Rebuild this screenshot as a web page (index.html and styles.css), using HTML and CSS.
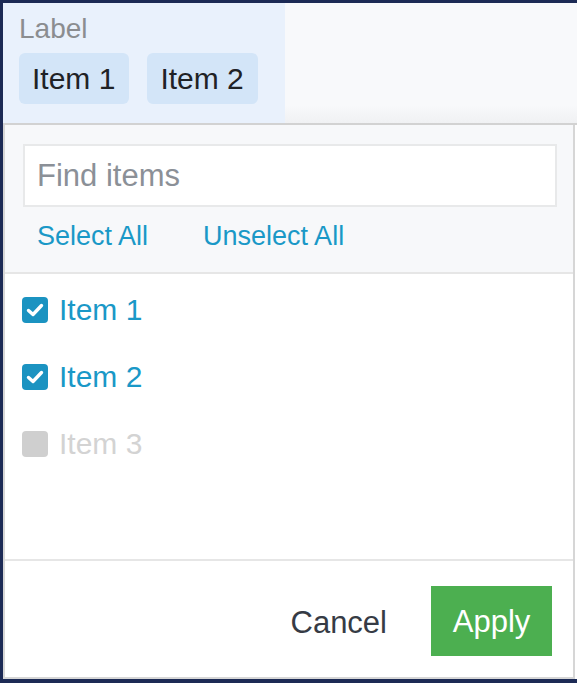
FILE: index.html
```html
<!DOCTYPE html>
<html>
<head>
<meta charset="utf-8">
<link rel="stylesheet" href="styles.css">
</head>
<body>
<div class="frame">
  <div class="header">
    <div class="field">
      <div class="label">Label</div>
      <div class="chips">
        <span class="chip">Item 1</span>
        <span class="chip">Item 2</span>
      </div>
    </div>
  </div>
  <div class="panel">
    <div class="top">
      <div class="search">Find items</div>
      <div class="links">
        <span class="link">Select All</span>
        <span class="link">Unselect All</span>
      </div>
    </div>
    <div class="list">
      <div class="item checked">
        <span class="box"><svg viewBox="0 0 24 24" width="24" height="24"><path d="M5.5 12.5 L10 16.5 L18.5 7.5" fill="none" stroke="#fff" stroke-width="3.4" stroke-linecap="round" stroke-linejoin="round"/></svg></span>
        <span class="text">Item 1</span>
      </div>
      <div class="item checked">
        <span class="box"><svg viewBox="0 0 24 24" width="24" height="24"><path d="M5.5 12.5 L10 16.5 L18.5 7.5" fill="none" stroke="#fff" stroke-width="3.4" stroke-linecap="round" stroke-linejoin="round"/></svg></span>
        <span class="text">Item 2</span>
      </div>
      <div class="item disabled">
        <span class="box"></span>
        <span class="text">Item 3</span>
      </div>
    </div>
    <div class="footer">
      <span class="cancel">Cancel</span>
      <span class="apply">Apply</span>
    </div>
  </div>
</div>
</body>
</html>
```

FILE: styles.css
```css
html, body {
  margin: 0;
  padding: 0;
  background: #ffffff;
}
body {
  width: 577px;
  height: 683px;
  overflow: hidden;
  font-family: "Liberation Sans", Arial, sans-serif;
}
.frame {
  box-sizing: border-box;
  width: 577px;
  height: 683px;
  border-top: 3px solid #1c2a55;
  border-left: 3px solid #1c2a55;
  border-bottom: 4px solid #1c2a55;
  display: flex;
  flex-direction: column;
}
.header {
  height: 120px;
  background: linear-gradient(#f8f9fb 0%, #f8f9fb 85%, #f0f1f3 100%);
  border-bottom: 2px solid #d2d2d2;
  display: flex;
  flex-shrink: 0;
}
.field {
  width: 282px;
  background: #e9f1fc;
  box-sizing: border-box;
  padding: 11px 0 0 16px;
}
.label {
  font-size: 28px;
  color: #8b8d90;
  line-height: 30px;
}
.chips {
  display: flex;
  gap: 18px;
  margin-top: 9px;
}
.chip {
  background: #d3e5f8;
  border-radius: 6px;
  height: 51px;
  line-height: 51px;
  padding: 0 14px 0 13px;
  font-size: 30px;
  color: #1f2226;
}
.panel {
  flex: 1;
  display: flex;
  flex-direction: column;
  border-left: 2px solid #d6d6d6;
  border-right: 2px solid #d6d6d6;
  border-bottom: 2px solid #d6d6d6;
  margin-right: 2px;
}
.top {
  background: #f7f8fa;
  padding: 19px 16px 0 18px;
  height: 149px;
  box-sizing: border-box;
  border-bottom: 2px solid #e6e6e6;
}
.search {
  background: #ffffff;
  border: 2px solid #e8e9ea;
  height: 63px;
  box-sizing: border-box;
  padding-left: 12px;
  line-height: 60px;
  font-size: 31px;
  color: #8b9097;
}
.links {
  display: flex;
  gap: 55px;
  padding-left: 14px;
  margin-top: 14px;
}
.link {
  font-size: 27px;
  color: #1a98c7;
}
.list {
  background: #ffffff;
  height: 287px;
  box-sizing: border-box;
  border-bottom: 2px solid #e6e6e6;
  padding: 18px 0 0 17px;
  display: flex;
  flex-direction: column;
  gap: 32px;
}
.item {
  display: flex;
  align-items: center;
  gap: 11px;
  height: 35px;
}
.box {
  width: 26px;
  height: 26px;
  border-radius: 4px;
  background: #1b93c1;
  display: flex;
  align-items: center;
  justify-content: center;
}
.text {
  font-size: 30px;
  color: #1a98c7;
}
.disabled .box {
  background: #cfcfcf;
}
.disabled .text {
  color: #d3d3d3;
}
.footer {
  flex: 1;
  background: #ffffff;
  display: flex;
  justify-content: flex-end;
  align-items: center;
  padding-right: 21px;
  gap: 44px;
}
.cancel {
  font-size: 31px;
  color: #363b45;
  margin-top: 8px;
}
.apply {
  background: #4caf50;
  color: #ffffff;
  font-size: 31px;
  width: 121px;
  height: 70px;
  line-height: 72px;
  text-align: center;
  margin-top: 3px;
}
```
